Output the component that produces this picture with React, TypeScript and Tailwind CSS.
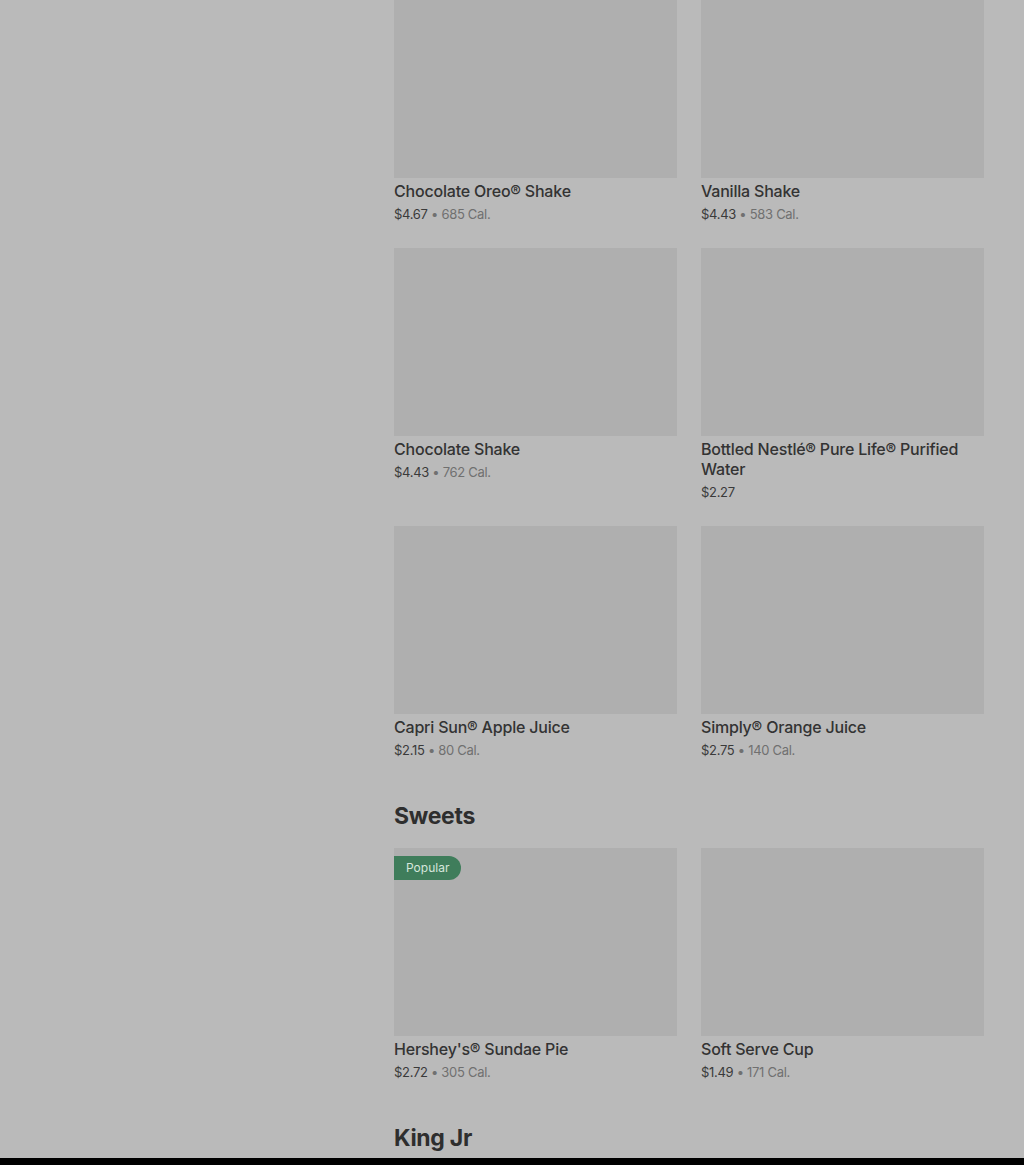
import React from "react";

type Item = { name: string; price: string; cal?: string; popular?: boolean };

const DRINKS: Item[] = [
  { name: "Chocolate Oreo® Shake", price: "$4.67", cal: "685 Cal." },
  { name: "Vanilla Shake", price: "$4.43", cal: "583 Cal." },
  { name: "Chocolate Shake", price: "$4.43", cal: "762 Cal." },
  { name: "Bottled Nestlé® Pure Life® Purified Water", price: "$2.27" },
  { name: "Capri Sun® Apple Juice", price: "$2.15", cal: "80 Cal." },
  { name: "Simply® Orange Juice", price: "$2.75", cal: "140 Cal." },
];

const SWEETS: Item[] = [
  { name: "Hershey's® Sundae Pie", price: "$2.72", cal: "305 Cal.", popular: true },
  { name: "Soft Serve Cup", price: "$1.49", cal: "171 Cal." },
];

function ItemCard({ item }: { item: Item }) {
  return (
    <div className="flex flex-col">
      <div className="relative h-[188px] bg-[#afafaf]">
        {item.popular && (
          <span className="absolute left-0 top-2 flex h-6 items-center rounded-r-full bg-[#3f7d5b] pl-3 pr-3 text-[12px] text-[#d6e6dc]">
            Popular
          </span>
        )}
      </div>
      <p className="mt-[3px] text-[16px] leading-5 font-medium tracking-[-0.2px] text-[#333333]">{item.name}</p>
      <p className="mt-[3px] text-[13px] leading-5 tracking-[-0.3px] text-[#3a3a3a]">
        {item.price}
        {item.cal && (
          <span className="text-[#707070]">
            {" • "}
            {item.cal}
          </span>
        )}
      </p>
    </div>
  );
}

function Grid({ items }: { items: Item[] }) {
  return (
    <div className="grid grid-cols-2 gap-x-6 gap-y-6">
      {items.map((it) => (
        <ItemCard key={it.name} item={it} />
      ))}
    </div>
  );
}

export default function App() {
  return (
    <div className="flex h-[1165px] flex-col bg-black font-['Inter',sans-serif]">
      <div className="h-[1158px] overflow-hidden bg-[#bababa]">
        <div className="ml-[394px] w-[590px] -mt-[10px]">
          <Grid items={DRINKS} />
          <h2 className="mt-10 mb-4 text-[23px] leading-8 font-bold tracking-[-0.3px] text-[#2e2e2e]">Sweets</h2>
          <Grid items={SWEETS} />
          <h2 className="mt-10 text-[23px] leading-8 font-bold tracking-[-0.3px] text-[#2e2e2e]">King Jr</h2>
        </div>
      </div>
    </div>
  );
}
